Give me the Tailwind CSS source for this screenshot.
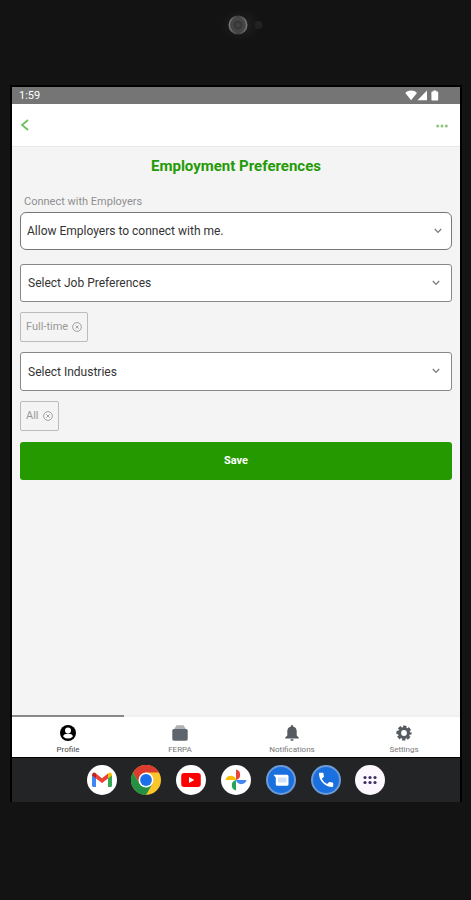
<!DOCTYPE html>
<html lang="en">
<head>
<meta charset="utf-8">
<meta name="viewport" content="width=device-width, initial-scale=1">
<title>Employment Preferences</title>
<script src="https://cdn.jsdelivr.net/npm/@tailwindcss/browser@4"></script>
</head>
<body class="flex min-h-screen flex-col bg-[#131313] font-['Roboto','Liberation_Sans',sans-serif]">

<!-- Camera bezel -->
<div class="flex h-[87px] justify-center pt-2">
  <svg class="h-[34px] w-[60px]" viewBox="0 0 60 34" aria-hidden="true">
    <defs>
      <radialGradient id="glow"><stop offset="0" stop-color="#222"/><stop offset="1" stop-color="#131313"/></radialGradient>
      <linearGradient id="ring" x1="0" y1="0" x2="1" y2="0"><stop offset="0" stop-color="#777"/><stop offset=".5" stop-color="#3c3c3c"/><stop offset="1" stop-color="#777"/></linearGradient>
    </defs>
    <ellipse cx="35" cy="17" rx="20" ry="16" fill="url(#glow)"/>
    <circle cx="32" cy="17" r="8.700" fill="#444" stroke="url(#ring)" stroke-width="1.600"/>
    <circle cx="32" cy="17" r="5.200" fill="#383838" stroke="#4c4c4c" stroke-width=".8"/>
    <circle cx="32" cy="17" r="2" fill="#444"/>
    <circle cx="52.500" cy="17" r="4" fill="#222"/>
  </svg>
</div>

<div class="mr-[10px] mb-[98px] ml-[11px] flex flex-1 flex-col border-x border-black shadow-[0_-1px_0_1px_#000]">
  <!-- Status bar -->
  <div class="flex h-[17px] items-center justify-between bg-[#757575] pr-[21px] pl-[7px] text-white">
    <span class="text-[11px] leading-4">1:59</span>
    <svg class="h-[11px] w-[34px]" viewBox="0 0 34 11" fill="#fff" aria-hidden="true">
      <path d="M0.300 3C3.500-.2 8.700-.2 11.900 3L6.100 10.200z"/>
      <path d="M22 .5V10.300H12.500z"/>
      <path d="M28.200.4h3v1h1.300q.7 0 .7.700v7.600q0 .7-.7.700h-5.400q-.7 0-.7-.7V2.100q0-.7.7-.7h1.100z"/>
    </svg>
  </div>

  <header class="flex h-[43px] items-center justify-between border-b border-[#e8e8e8] bg-white pr-3 pl-2">
    <button type="button" aria-label="Back">
      <svg class="h-3 w-[9px]" viewBox="0 0 9 12" fill="none" stroke="#6cc05a" stroke-width="1.700"><path d="M8 1L2 6l6 5"/></svg>
    </button>
    <button type="button" aria-label="More options" class="pt-[2px]">
      <svg class="h-3 w-3" viewBox="0 0 12 12" fill="#8fc27f"><circle cx="1.700" cy="6" r="1.500"/><circle cx="6" cy="6" r="1.500"/><circle cx="10.300" cy="6" r="1.500"/></svg>
    </button>
  </header>

  <main class="flex-1 bg-[#f4f4f4] px-2 pt-[9px]">
    <h1 class="text-center text-[15px] leading-5 font-bold text-[#249a06]">Employment Preferences</h1>

    <form class="flex flex-col">
      <label for="connect" class="mt-[18px] pl-1 text-[11px] leading-4 text-[#8f8f8f]">Connect with Employers</label>
      <div class="relative mt-[2px]">
        <select id="connect" class="block h-[38px] w-full appearance-none rounded-md border border-[#777] bg-white px-[6px] text-[12px] text-[#333]"><option>Allow Employers to connect with me.</option></select>
        <svg class="pointer-events-none absolute top-4 right-[10px] h-[6px] w-2" viewBox="0 0 8 6" fill="none" stroke="#777" stroke-width="1.200"><path d="M.8 1L4 4.400 7.200 1"/></svg>
      </div>

      <div class="relative mt-[14px]">
        <select id="jobs" aria-label="Select Job Preferences" class="block h-[38px] w-full appearance-none rounded-[3px] border border-[#888] bg-white px-[7px] text-[12px] text-[#333]"><option>Select Job Preferences</option></select>
        <svg class="pointer-events-none absolute top-4 right-3 h-[6px] w-2" viewBox="0 0 8 6" fill="none" stroke="#777" stroke-width="1.200"><path d="M.8 1L4 4.400 7.200 1"/></svg>
      </div>
      <button type="button" aria-label="Remove Full-time" class="mt-[10px] flex h-[30px] items-center gap-1 self-start rounded-[2px] border border-[#bbb] px-[5px] text-[11px] text-[#999]">
        <span>Full-time</span>
        <svg class="h-[10px] w-[10px]" viewBox="0 0 10 10" fill="none" stroke="#999" stroke-width=".9"><circle cx="5" cy="5" r="4.400"/><path d="M3.500 3.500l3 3m0-3l-3 3"/></svg>
      </button>

      <div class="relative mt-[10px]">
        <select id="industries" aria-label="Select Industries" class="block h-[39px] w-full appearance-none rounded-[3px] border border-[#888] bg-white px-[7px] text-[12px] text-[#333]"><option>Select Industries</option></select>
        <svg class="pointer-events-none absolute top-4 right-3 h-[6px] w-2" viewBox="0 0 8 6" fill="none" stroke="#777" stroke-width="1.200"><path d="M.8 1L4 4.400 7.200 1"/></svg>
      </div>
      <button type="button" aria-label="Remove All" class="mt-[10px] flex h-[30px] items-center gap-1 self-start rounded-[2px] border border-[#bbb] px-[5px] text-[11px] text-[#999]">
        <span>All</span>
        <svg class="h-[10px] w-[10px]" viewBox="0 0 10 10" fill="none" stroke="#999" stroke-width=".9"><circle cx="5" cy="5" r="4.400"/><path d="M3.500 3.500l3 3m0-3l-3 3"/></svg>
      </button>

      <button type="submit" class="mt-[11px] h-[38px] rounded-[3px] bg-[#249a00] text-[11px] font-bold text-white">Save</button>
    </form>
  </main>

  <!-- Tab bar -->
  <nav class="grid grid-cols-4 border-b border-black bg-white text-[8px] leading-[10px] text-[#777]">
    <a href="#profile" aria-current="page" class="flex flex-col items-center border-t-2 border-[#888] pt-2 pb-[2px] text-[#444]">
      <svg class="h-4 w-4" viewBox="0 0 16 16" aria-hidden="true"><circle cx="8" cy="8" r="8" fill="#000"/><circle cx="8" cy="5.500" r="3" fill="#fff"/><path d="M3.300 11.700V11c0-1.500 3-2.200 4.700-2.200s4.700.7 4.700 2.200v.7Q10.700 13.600 8 13.600T3.300 11.700z" fill="#fff"/></svg>
      <span class="mt-1">Profile</span>
    </a>
    <a href="#ferpa" class="flex flex-col items-center border-t-2 border-[#f0f0f0] pt-2 pb-[2px]">
      <svg class="h-4 w-4" viewBox="0 0 16 16" aria-hidden="true"><path d="M4.500.2h7L14 4.200H2z" fill="#aeb2b5"/><path d="M2 4h12q1.700 0 1.700 1.600v8.500q0 1.700-1.700 1.700H2Q.3 15.800.3 14.100V5.600Q.3 4 2 4z" fill="#5f656c"/></svg>
      <span class="mt-1">FERPA</span>
    </a>
    <a href="#notifications" class="flex flex-col items-center border-t-2 border-[#f0f0f0] pt-2 pb-[2px]">
      <svg class="h-4 w-4" viewBox="0 0 16 16" fill="#555b61" aria-hidden="true"><path d="M8 0q1.100 0 1.100 1.400C11.700 2 12.700 4 12.700 6.300v4.300l2.200 2.200v.7H1.100v-.7l2.200-2.200V6.300C3.300 4 4.300 2 6.900 1.400Q6.900 0 8 0zM6.300 14.300h3.400Q9.500 16 8 16t-1.700-1.700z"/></svg>
      <span class="mt-1">Notifications</span>
    </a>
    <a href="#settings" class="flex flex-col items-center border-t-2 border-[#f0f0f0] pt-2 pb-[2px]">
      <svg class="h-4 w-4" viewBox="0 0 16 16" fill="none" stroke="#555b61" aria-hidden="true"><circle cx="8" cy="8" r="4.500" stroke-width="3.200"/><circle cx="8" cy="8" r="6.400" stroke-width="2.400" stroke-dasharray="3.300 1.727" stroke-dashoffset="1.650"/></svg>
      <span class="mt-1">Settings</span>
    </a>
  </nav>

  <!-- App dock -->
  <div class="flex h-11 items-center justify-center bg-[#232426]">
    <div class="flex w-2/3 justify-between">
      <a href="#mail" aria-label="Gmail"><svg class="h-[30px] w-[30px]" viewBox="0 0 30 30"><circle cx="15" cy="15" r="15" fill="#fff"/><path d="M5 9.500l4 3V22H6.500Q5 22 5 20.500z" fill="#4285f4"/><path d="M25 9.500l-4 3V22h2.500q1.500 0 1.500-1.500z" fill="#34a853"/><path d="M9 8.600l6 4.600 6-4.600v5L15 18l-6-4.400z" fill="#ea4335"/><path d="M5 10.500Q5 7.500 7.500 7.500L9 8.600v5l-4-3z" fill="#c5221f"/><path d="M25 10.500q0-3-2.500-3L21 8.600v5l4-3z" fill="#fbbc04"/></svg></a>
      <a href="#browser" aria-label="Chrome"><svg class="h-[30px] w-[30px]" viewBox="0 0 30 30"><circle cx="15" cy="15" r="15" fill="#fbc62c"/><path d="M2 7.500A15 15 0 0 1 28 7.500H15L8.500 18.800z" fill="#dc3b30"/><path d="M2 7.500A15 15 0 0 0 15 30l6.500-11.200L8.500 18.800z" fill="#239044"/><circle cx="15" cy="15" r="7.500" fill="#fff"/><circle cx="15" cy="15" r="5.900" fill="#1a70e8"/></svg></a>
      <a href="#video" aria-label="YouTube"><svg class="h-[30px] w-[30px]" viewBox="0 0 30 30"><circle cx="15" cy="15" r="15" fill="#fff"/><rect x="5.200" y="8" width="19.600" height="14" rx="3" fill="#f00"/><path d="M13 11.900v6.200l5.300-3.100z" fill="#fff"/></svg></a>
      <a href="#photos" aria-label="Photos"><svg class="h-[30px] w-[30px]" viewBox="0 0 30 30"><circle cx="15" cy="15" r="15" fill="#fff"/><path d="M15 4.500a5.400 5.400 0 0 1 0 10.500z" fill="#ea4335"/><path d="M25.500 15a5.400 5.400 0 0 1-10.500 0z" fill="#4285f4"/><path d="M15 25.500a5.400 5.400 0 0 1 0-10.500z" fill="#22a653"/><path d="M4.500 15a5.400 5.400 0 0 1 10.500 0z" fill="#fbbc04"/></svg></a>
      <a href="#messages" aria-label="Messages"><svg class="h-[30px] w-[30px]" viewBox="0 0 30 30"><circle cx="15" cy="15" r="14" fill="#1b70df" stroke="#6c9bd8" stroke-width="2"/><path d="M7.500 9.800h13.500q1.500 0 1.500 1.500v7.900q0 1.500-1.500 1.500H11.300q-1.500 0-1.500-1.500v-6.500z" fill="#fff"/><path d="M12 12.500h8.500v5H12z" fill="#cfe0fa"/></svg></a>
      <a href="#phone" aria-label="Phone"><svg class="h-[30px] w-[30px]" viewBox="0 0 30 30"><circle cx="15" cy="15" r="14" fill="#1b70df" stroke="#6c9bd8" stroke-width="2"/><path d="M10.800 13.700a11 11 0 0 0 5.300 5.300l1.800-1.800q.4-.4.900-.2 1.300.4 2.600.4.800 0 .8.800v2.900q0 .8-.8.800A13.400 13.400 0 0 1 8 8.500q0-.8.800-.8h2.900q.8 0 .8.800 0 1.400.4 2.600.2.500-.2.900z" fill="#fff"/></svg></a>
      <a href="#apps" aria-label="All apps"><svg class="h-[30px] w-[30px]" viewBox="0 0 30 30"><circle cx="15" cy="15" r="15" fill="#fbf7fd"/><g fill="#393060"><circle cx="10" cy="12.500" r="1.600"/><circle cx="15" cy="12.500" r="1.600"/><circle cx="20" cy="12.500" r="1.600"/><circle cx="10" cy="17.500" r="1.600"/><circle cx="15" cy="17.500" r="1.600"/><circle cx="20" cy="17.500" r="1.600"/></g></svg></a>
    </div>
  </div>
</div>
</body>
</html>
